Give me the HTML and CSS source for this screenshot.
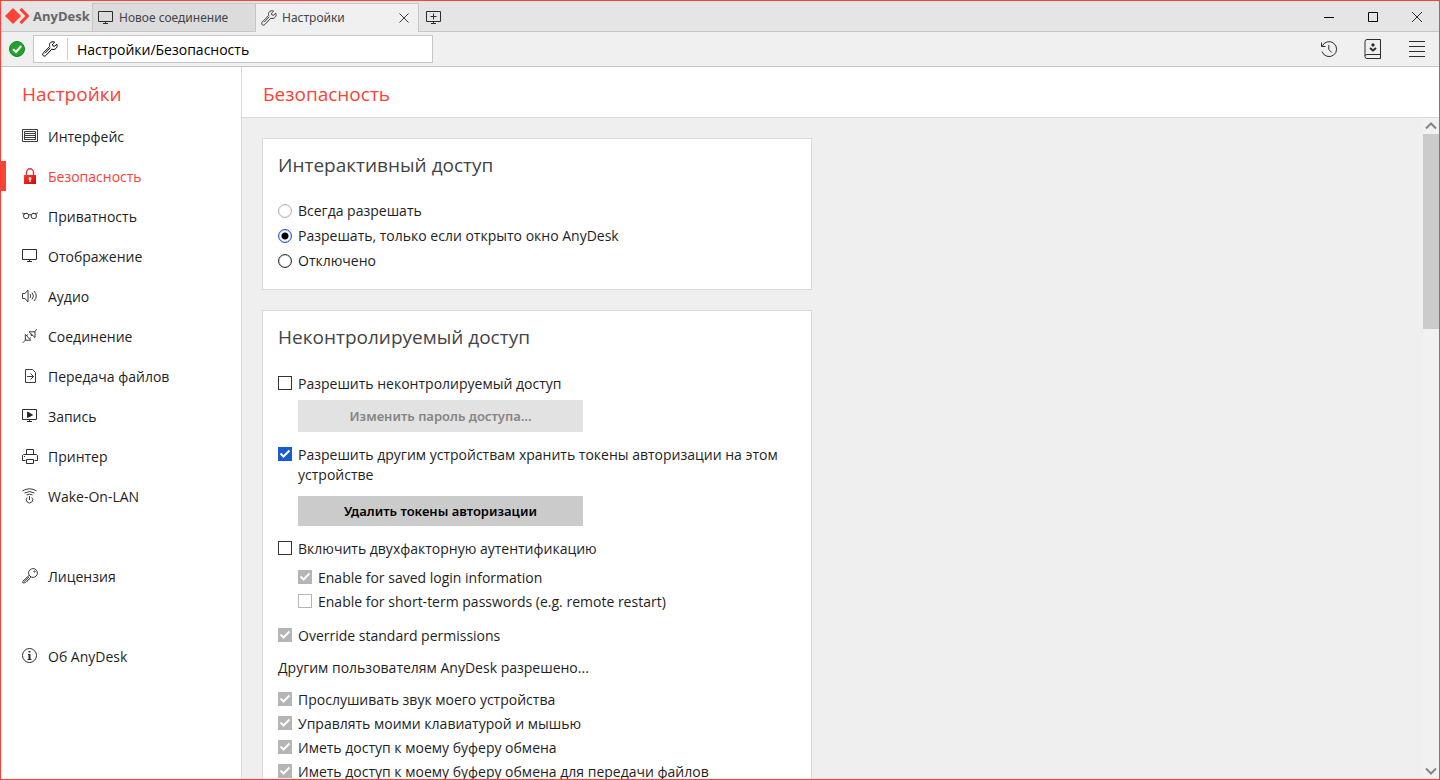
FILE: index.html
```html
<!DOCTYPE html>
<html lang="ru">
<head>
<meta charset="utf-8">
<meta name="viewport" content="width=device-width, initial-scale=1">
<title>AnyDesk – Настройки</title>
<link rel="stylesheet" href="styles.css">
</head>
<body>
<svg class="sprite" aria-hidden="true">
  <symbol id="wrench" viewBox="0 0 16 16"><path d="M14.8 3.2 12.6 5.2 10.8 4.9 10.5 3.2 12.6 1.2C11 .3 9 .7 8 2.2 7.4 3.2 7.4 4.3 7.8 5.300L1.300 12C.5 12.800.5 14 1.200 14.700 1.900 15.300 3.100 15.300 3.900 14.500L9.800 8.200C11.300 8.800 13 8.500 14.200 7.200 15.200 6.100 15.400 4.500 14.800 3.200ZM8.300 6.800 3.200 12.200"/></symbol>
  <symbol id="monitor" viewBox="0 0 16 16"><path d="M.5 1.500h14v10H.5zM7.500 12v1.500M5 13.500h5"/></symbol>
</svg>
<div class="window">
  <header class="titlebar">
    <div class="brand">
      <svg class="logo" width="26" height="18" viewBox="0 0 26 18"><path d="M9 1l8 8-8 8-8-8z"/><path d="M15.500 3l2.200-2.200L25.500 9l-7.800 8.200L15.500 15l5.800-6z"/></svg>
      <span>AnyDesk</span>
    </div>
    <nav class="tabs" aria-label="Вкладки">
      <div class="tab"><button class="tab-label" type="button"><svg class="icon icon-dark" width="16" height="16"><use href="#monitor"/></svg>Новое соединение</button></div>
      <div class="tab tab-active"><button class="tab-label" type="button"><svg class="icon" width="16" height="16"><use href="#wrench"/></svg>Настройки</button>
        <button class="tab-close" type="button" aria-label="Закрыть вкладку"><svg class="icon" width="10" height="10"><path d="M.5.500l9 9M9.500.500l-9 9"/></svg></button></div>
      <button class="tab-new" type="button" aria-label="Новая вкладка"><svg class="icon icon-dark" width="16" height="14"><path d="M.5.500h14v10H.5zM7.500 2.500v6M4.500 5.500h6M7.500 11v1.500M5 12.500h5"/></svg></button>
    </nav>
    <div class="actions">
      <button type="button" aria-label="Свернуть"><svg class="icon icon-black" width="10" height="10"><path d="M0 5.500h10"/></svg></button>
      <button type="button" aria-label="Развернуть"><svg class="icon icon-black" width="10" height="10"><path d="M.5.500h9v9h-9z"/></svg></button>
      <button type="button" aria-label="Закрыть"><svg class="icon icon-dark" width="10" height="10"><path d="M0 0l10 10M10 0L0 10"/></svg></button>
    </div>
  </header>
  <div class="toolbar">
    <svg class="status" width="16" height="16" viewBox="0 0 16 16" role="img" aria-label="Готово"><circle cx="8" cy="8" r="7.500"/><path d="M4 8.200l3 2.800 5.200-6"/></svg>
    <label class="address">
      <svg class="icon icon-black" width="16" height="16"><use href="#wrench"/></svg>
      <input type="text" aria-label="Адрес" value="Настройки/Безопасность">
    </label>
    <div class="actions">
      <button type="button" aria-label="История"><svg class="icon icon-dark" width="18" height="18"><path d="M2.200 6.200A7.500 7.500 0 1 1 2 11.500M1.500 2.500v4h4M8.800 5v4.500l3 3"/></svg></button>
      <button type="button" aria-label="Адресная книга"><svg class="icon icon-dark" width="18" height="20"><path d="M3 .5h13.500v19H3a2 2 0 0 1-2-2v-15a2 2 0 0 1 2-2zM1 17a2 2 0 0 1 2-1.500h13.500"/><circle class="solid" cx="9" cy="6" r="1.200"/><path class="bold" d="M6 9 9 11.500 12 9"/></svg></button>
      <button type="button" aria-label="Меню"><svg class="icon icon-dark" width="16" height="16"><path d="M0 .5h16M0 5.500h16M0 10.500h16M0 15.500h16"/></svg></button>
    </div>
  </div>
  <div class="body">
    <aside class="sidebar">
      <h2 class="title">Настройки</h2>
      <nav class="menu">
        <a href="#"><svg class="icon" width="16" height="16"><path d="M.5 1.500h15v12H.5zM2.500 3.500h11v2h-11zM2.500 7.500h11M2.500 9.500h11v2h-11zM2.500 5.500v6M13.500 5.500v6"/></svg>Интерфейс</a>
        <a class="current" href="#" aria-current="page"><svg width="16" height="16"><defs><linearGradient id="red" x2="1" y2="1"><stop stop-color="#ff3a2e"/><stop offset="1" stop-color="#c80d08"/></linearGradient></defs><path d="M4.500 8V4.500a3.500 3.700 0 0 1 7 0V8" fill="none" stroke="#e2382f" stroke-width="1.400"/><path d="M2 7h12v9H2z" fill="url(#red)"/><path d="M8 9a1.700 1.700 0 0 1 .8 3.100V14H7.200v-1.900A1.700 1.700 0 0 1 8 9z" fill="#ffdcd8"/></svg>Безопасность</a>
        <a href="#"><svg class="icon" width="16" height="16"><circle cx="4.200" cy="8" r="2.700"/><circle cx="11.800" cy="8" r="2.700"/><path d="M6.800 7q1.200-.8 2.400 0M1.800 6.500.3 4.500M14.200 6.500l1.500-2M1.500 5.500h4M10.500 5.500h4"/></svg>Приватность</a>
        <a href="#"><svg class="icon icon-dark" width="16" height="16"><use href="#monitor"/></svg>Отображение</a>
        <a href="#"><svg class="icon" width="16" height="16"><path d="M.5 5.500H3l3-3.500v12l-3-3.500H.5zM8 6q1.500 2 0 4M10 4.500q3 3.500 0 7M12 3q4.500 5 0 10"/></svg>Аудио</a>
        <a href="#"><svg class="icon" width="16" height="16"><path d="M.8 14.800 4 11.600M3.300 6.300v5.900h5.400zM4.500 7.500 6.200 6.500M7.500 10.600 9 9.600M7 3.800h6v5.800zM12.500 4 14.800 1.200M9 5.800v1.600h1.600"/></svg>Соединение</a>
        <a href="#"><svg class="icon" width="16" height="16"><path d="M3.500 1.500h7l3 3v10h-10zM5 8.500h6.500M8.500 5.500l3 3-3 3"/></svg>Передача файлов</a>
        <a href="#"><svg class="icon icon-dark" width="16" height="16"><use href="#monitor"/><path class="solid" d="M5.500 4v5.500L10.500 7z"/></svg>Запись</a>
        <a href="#"><svg class="icon icon-dark" width="16" height="16"><path d="M4.500 6V1.500h7V6M3.500 12.500H.5v-5l1-1h13l1 1v5h-3M4.500 11.500h7v4h-7zM2 8.500h1"/></svg>Принтер</a>
        <a href="#"><svg class="icon" width="16" height="16"><path d="M.5 3q7-4.500 14 0M2.500 5q5-3 10 0M4.500 7q3-1.800 6 0M5.200 9.500a3.200 3.200 0 1 0 4.600 0M7.500 8v4"/></svg>Wake-On-LAN</a>
        <a class="spaced" href="#"><svg class="icon" width="16" height="16"><circle cx="11" cy="5" r="4.400"/><circle cx="12.500" cy="3.500" r=".6"/><path d="M7.200 7.300.8 13.300v1.500l2 .2 1.500-1.700 1.200-.2.300-1.300 1.300-.3.500-1.200 1.300-1.200M2.200 13.500l5-4.700"/></svg>Лицензия</a>
        <a class="spaced" href="#"><svg class="icon icon-dark" width="16" height="16"><circle cx="7.500" cy="7.500" r="7"/><path d="M6 6.500h1.500v4.500M5.500 11.500h4"/><path class="bold" d="M7.500 6v5.500M7.500 3v1.600"/></svg>Об AnyDesk</a>
      </nav>
    </aside>
    <main class="main">
      <header class="page-header"><h1 class="title">Безопасность</h1></header>
      <div class="viewport">
        <div class="content">
          <section class="card">
            <h2>Интерактивный доступ</h2>
            <label class="option radio-row"><input type="radio" name="access" disabled><span>Всегда разрешать</span></label>
            <label class="option radio-row"><input type="radio" name="access" checked><span>Разрешать, только если открыто окно AnyDesk</span></label>
            <label class="option radio-row"><input type="radio" name="access"><span>Отключено</span></label>
          </section>
          <section class="card">
            <h2>Неконтролируемый доступ</h2>
            <label class="option"><input type="checkbox"><span>Разрешить неконтролируемый доступ</span></label>
            <button class="push password" type="button" disabled>Изменить пароль доступа...</button>
            <label class="option multiline"><input type="checkbox" checked><span>Разрешить другим устройствам хранить токены авторизации на этом устройстве</span></label>
            <button class="push" type="button">Удалить токены авторизации</button>
            <label class="option factor"><input type="checkbox"><span>Включить двухфакторную аутентификацию</span></label>
            <div class="nested">
              <label class="option"><input type="checkbox" checked disabled><span>Enable for saved login information</span></label>
              <label class="option"><input type="checkbox" disabled><span>Enable for short-term passwords (e.g. remote restart)</span></label>
            </div>
            <label class="option"><input type="checkbox" checked disabled><span>Override standard permissions</span></label>
            <p class="note">Другим пользователям AnyDesk разрешено...</p>
            <label class="option"><input type="checkbox" checked disabled><span>Прослушивать звук моего устройства</span></label>
            <label class="option"><input type="checkbox" checked disabled><span>Управлять моими клавиатурой и мышью</span></label>
            <label class="option"><input type="checkbox" checked disabled><span>Иметь доступ к моему буферу обмена</span></label>
            <label class="option"><input type="checkbox" checked disabled><span>Иметь доступ к моему буферу обмена для передачи файлов</span></label>
          </section>
        </div>
        <div class="scrollbar">
          <button type="button" aria-label="Вверх"><svg class="arrow" width="12" height="8"><path d="M1 6.500l5-5 5 5"/></svg></button>
          <div class="track"><div class="thumb"></div></div>
          <button type="button" aria-label="Вниз"><svg class="arrow" width="12" height="8"><path d="M1 1.500l5 5 5-5"/></svg></button>
        </div>
      </div>
    </main>
  </div>
</div>
</body>
</html>
```
FILE: styles.css
```css
* { box-sizing: border-box; }
body { margin: 0; font: 14px/20px "Open Sans", "Noto Sans", sans-serif; color: #1e1e1e; }
h1, h2, p { margin: 0; font-weight: 400; }
button { border: 0; padding: 0; background: none; font: inherit; color: inherit; display: flex; align-items: center; justify-content: center; }
svg { flex: none; display: block; }
.sprite { position: absolute; width: 0; height: 0; }
.icon { fill: none; stroke: #3c3c3c; stroke-width: 1; }
.icon-dark { stroke: #2d2d2d; }
.icon-black { stroke: #000; }
.solid { fill: #222; }
.bold { stroke-width: 2; }

.window { height: 100vh; display: flex; flex-direction: column; border: 1px solid #ff4136; background: #fff; overflow: hidden; }

.titlebar { display: flex; height: 31px; flex: none; background: #e5e5e5; box-shadow: inset 0 -1px #c6c6c6; }
.brand { display: flex; align-items: center; gap: 3px; width: 91px; padding: 0 0 2px 3px; font-weight: 700; font-size: 13px; color: #666; }
.logo { fill: #ff4136; }
.tabs { display: flex; padding-top: 2px; }
.tab { display: flex; width: 163px; border: solid #c6c6c6; border-width: 1px 0 1px 1px; background: #dcdcdc; }
.tab-active { width: 164px; border-width: 1px 1px 0 1px; background: #f0f0f0; }
.tab-label { flex: 1; justify-content: flex-start; gap: 5px; padding-left: 5px; font-family: "Noto Sans", sans-serif; font-size: 12px; color: #444; }
.tab-close { width: 28px; }
.tab-new { width: 30px; }
.actions { display: flex; margin-left: auto; }
.actions button { width: 44px; }

.toolbar { display: flex; align-items: center; height: 35px; flex: none; padding-left: 8px; background: #f0f0f0; border-bottom: 1px solid #c6c6c6; }
.toolbar .actions { align-self: stretch; }
.status circle { fill: #23a12d; stroke: #17851f; }
.status path { fill: none; stroke: #fff; stroke-width: 2; }
.address { display: flex; align-items: center; width: 400px; height: 28px; margin-left: 8px; padding-left: 8px; background: #fff; border: 1px solid #c6c6c6; }
.address input { flex: 1; height: 22px; margin-left: 9px; padding: 0 9px; border: 0; border-left: 1px solid #d0d0d0; background: none; font: inherit; color: #000; outline: none; }

.body { display: flex; flex: 1; min-height: 0; }
.sidebar { width: 241px; flex: none; border-right: 1px solid #d9d9d9; }
.title, .card h2 { font-size: 19px; line-height: 24px; color: #ff4136; }
.sidebar .title { padding: 15px 21px 10px; }
.menu { display: flex; flex-direction: column; }
.menu a { display: flex; align-items: center; gap: 10px; height: 40px; padding: 2px 0 0 21px; color: inherit; text-decoration: none; }
.menu svg { margin-bottom: 2px; }
.menu .spaced { margin-top: 40px; }
.menu .current { color: #ff4136; background: linear-gradient(#ff4136, #ff4136) left center / 5px 30px no-repeat; }

.main { display: flex; flex: 1; flex-direction: column; min-width: 0; }
.page-header { flex: none; padding: 15px 21px 11px; border-bottom: 1px solid #d9d9d9; }
.viewport { display: flex; flex: 1; min-height: 0; background: #efefef; }
.content { flex: 1; padding: 20px; overflow: hidden; }
.card { max-width: 550px; margin-bottom: 20px; padding: 14px 15px 15px; background: #fff; border: 1px solid #d9d9d9; }
.card h2 { margin-bottom: 22px; color: #444; }

.option { display: flex; align-items: center; gap: 6px; min-height: 24px; }
.option span { padding-top: 2px; }
.radio-row { align-items: flex-start; min-height: 25px; padding-top: 5px; }
.radio-row span { margin-top: -3px; padding: 0; }
.multiline { align-items: flex-start; margin: 12px 0 11px; }
.multiline span { padding-top: 1px; }
.factor { margin-top: 10px; }
.nested { margin: 5px 0 10px 20px; }
.note { margin: 8px 0; padding-top: 1px; line-height: 23px; }
input[type="checkbox"], input[type="radio"] { flex: none; appearance: none; width: 14px; height: 14px; margin: 0; border: 1px solid #333; background: #fff; }
.multiline input[type="checkbox"] { margin-top: 3px; }
input[type="radio"] { border-radius: 50%; box-shadow: inset 0 0 1px #333; }
input[type="radio"]:disabled { border-color: #b5b5b5; box-shadow: inset 0 0 1px #b5b5b5; }
input[type="radio"]:checked { border-color: #1a5ad0; box-shadow: inset 0 0 1px #1a5ad0; background: radial-gradient(circle, #000 3px, #fff 4px); }
input[type="checkbox"]:checked { border-color: #1a5ad0; background: #1a5ad0 url("data:image/svg+xml,%3Csvg xmlns='http://www.w3.org/2000/svg' viewBox='0 0 12 12'%3E%3Cpath d='M1.500 5.500l3 3 6-6' fill='none' stroke='white' stroke-width='2'/%3E%3C/svg%3E") center / 12px no-repeat; }
input[type="checkbox"]:disabled { border-color: #b5b5b5; }
input[type="checkbox"]:checked:disabled { background-color: #b5b5b5; }
.push { width: 285px; height: 30px; margin-left: 20px; background: #cbcbcb; color: #000; font-family: "Noto Sans", sans-serif; font-size: 13px; font-weight: 600; }
.password { height: 32px; margin-top: 5px; }
.push:disabled { background: #e2e2e2; color: #858585; }

.scrollbar { display: flex; flex-direction: column; width: 16px; flex: none; background: #f1f1f1; }
.scrollbar button { height: 16px; }
.arrow { fill: none; stroke: #858585; stroke-width: 2; }
.track { flex: 1; }
.thumb { height: 31%; background: #cbcbcb; }
```
